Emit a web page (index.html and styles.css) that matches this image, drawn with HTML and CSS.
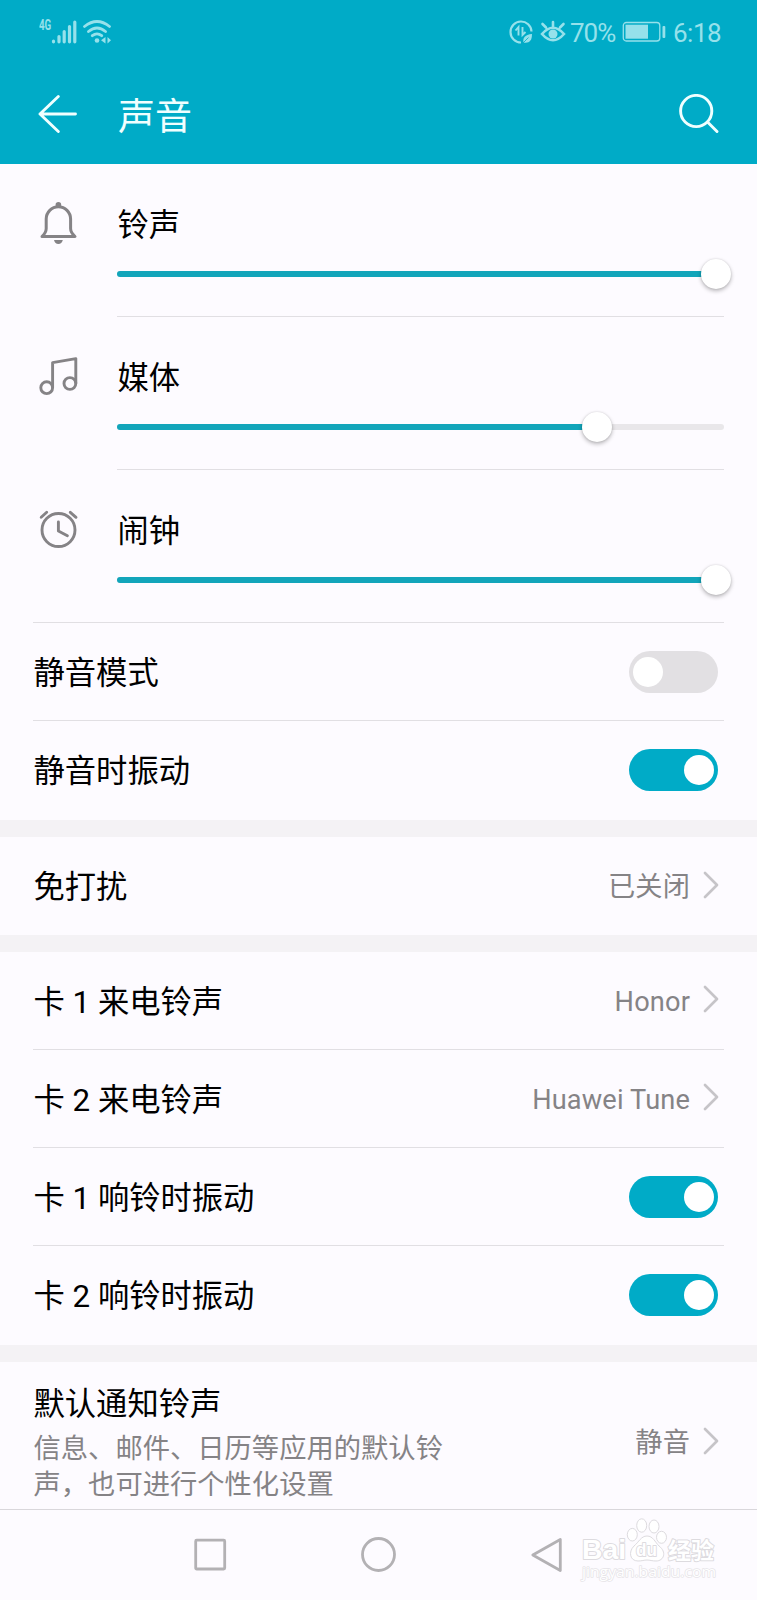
FILE: index.html
```html
<!DOCTYPE html>
<html lang="zh-CN">

<head>
    <meta charset="UTF-8">
    <title>声音</title>
    <link rel="stylesheet" href="styles.css">
</head>

<body>

    <header>
        <!-- Status bar -->
        <div class="status">
            <span class="network">4G</span>
            <svg class="signal" width="26" height="24" viewBox="0 0 26 24" stroke="currentColor" stroke-width="3.2" stroke-linecap="round">
                <path d="M2.5 21.2v.6M8 16.5v5.3M13.2 11.5v10.3M18.5 6.5v15.3M23.8 2v19.8" />
            </svg>
            <svg class="wifi" width="28" height="24" viewBox="0 0 28 24" fill="none" stroke="currentColor" stroke-width="2.8" stroke-linecap="round">
                <path d="M1.5 6.5Q14 -3.5 26.5 6.5M5.5 11.5Q14 4.5 22.5 11.5M9.3 15.7Q14 12 18.7 15.7" />
                <circle cx="14" cy="20.5" r="2.3" fill="currentColor" stroke="none" />
                <path d="M22.5 17v6.5L18 20.3zM24.5 17v6.5l3.5-3.2z" fill="currentColor" stroke="none" />
            </svg>
            <svg class="saver" width="24" height="26" viewBox="0 0 24 26" fill="none" stroke="currentColor" stroke-width="2.2">
                <path d="M12 23.5A10.5 10.5 0 1 1 22.5 12.5" />
                <path d="M6.5 11.5l3-3.5v8.5M13.5 8v8l3-3" stroke-width="1.9" />
                <path d="M23 15c0 7-3 9.5-8.5 8.5-1-4.5 1.500-8 8.500-8.500z" fill="currentColor" stroke="none" />
                <path d="M14 24l5.500-5.500" stroke="#00abc7" stroke-width=".8" />
            </svg>
            <svg class="eye" width="26" height="26" viewBox="0 0 26 26" fill="none" stroke="currentColor" stroke-width="2.6" stroke-linecap="round">
                <path d="M2 15Q13 2.500 24 15Q13 27.500 2 15zM13 7.500V3M6 8.500L2.500 5M20 8.500L23.500 5" />
                <circle cx="13" cy="15" r="4.500" fill="currentColor" stroke="none" />
            </svg>
            <span class="percent">70%</span>
            <svg class="battery" width="44" height="22" viewBox="0 0 44 22" fill="none" stroke="currentColor">
                <rect x="1.300" y="1.500" width="36.500" height="18.500" rx="3" stroke-width="1.300" />
                <rect x="3.500" y="3.700" width="22.500" height="14" fill="currentColor" stroke="none" />
                <rect x="40.500" y="5" width="2.800" height="12" rx="1" fill="currentColor" stroke="none" />
            </svg>
            <span class="time">6:18</span>
        </div>

        <!-- Title bar -->
        <div class="titlebar">
            <svg width="40" height="40" viewBox="0 0 40 40" fill="none" stroke="currentColor" stroke-width="2.9" stroke-linecap="round" stroke-linejoin="round">
                <path d="M37.5 20H2M20.3 2.5L2 20l18.300 17.500" />
            </svg>
            <h1>声音</h1>
            <svg width="40" height="40" viewBox="0 0 40 40" fill="none" stroke="currentColor" stroke-width="2.9" stroke-linecap="round">
                <circle cx="17.2" cy="17" r="15.6" />
                <path d="M28.5 28l9.500 9.500" />
            </svg>
        </div>
    </header>

    <main>
        <!-- Volume sliders -->
        <section>
            <div class="volume">
                <svg class="volume-icon" width="42" height="48" viewBox="0 0 42 48" fill="none" stroke="currentColor" stroke-width="3" stroke-linejoin="round">
                    <circle cx="20.4" cy="4.8" r="2.8" fill="currentColor" stroke="none" />
                    <path d="M8.200 19a12.200 12.200 0 0 1 24.400 0v9.500q0 4 4.400 8H4q4.200-4 4.200-8z" />
                    <path d="M16 40h8.800q-1 4-4.400 4t-4.400-4z" fill="currentColor" stroke="none" />
                </svg>
                <div class="volume-body">
                    <div class="label">铃声</div>
                    <div class="track"><div class="fill" style="width: 98.6%"></div></div>
                </div>
            </div>
            <div class="volume">
                <svg class="volume-icon" width="42" height="48" viewBox="0 0 42 48" fill="none" stroke="currentColor" stroke-width="2.9" stroke-linejoin="round">
                    <circle cx="8.7" cy="34.7" r="5.9" />
                    <circle cx="31.9" cy="30.5" r="5.9" />
                    <path d="M14.600 34.700V9.600l23.200-4v25" />
                </svg>
                <div class="volume-body">
                    <div class="label">媒体</div>
                    <div class="track"><div class="fill" style="width: 79.1%"></div></div>
                </div>
            </div>
            <div class="volume last">
                <svg class="volume-icon" width="42" height="48" viewBox="0 0 42 48" fill="none" stroke="currentColor" stroke-width="2.9" stroke-linecap="round" stroke-linejoin="round">
                    <circle cx="20.5" cy="24" r="16.5" />
                    <path d="M20.400 16v9l9 4.700M3.200 11.300l5.500-5M32.300 6.300l5.700 5" />
                </svg>
                <div class="volume-body">
                    <div class="label">闹钟</div>
                    <div class="track"><div class="fill" style="width: 98.6%"></div></div>
                </div>
            </div>
            <div class="row">
                <div class="label">静音模式</div>
                <div class="switch"></div>
            </div>
            <div class="row">
                <div class="label">静音时振动</div>
                <div class="switch on"></div>
            </div>
        </section>

        <section>
            <div class="row">
                <div class="label">免打扰</div>
                <div class="value">已关闭</div>
                <svg class="chevron" width="16" height="28" viewBox="0 0 16 28"><path d="M2 2l12 12L2 26" /></svg>
            </div>
        </section>

        <!-- SIM cards -->
        <section>
            <div class="row">
                <div class="label">卡 1 来电铃声</div>
                <div class="value">Honor</div>
                <svg class="chevron" width="16" height="28" viewBox="0 0 16 28"><path d="M2 2l12 12L2 26" /></svg>
            </div>
            <div class="row">
                <div class="label">卡 2 来电铃声</div>
                <div class="value">Huawei Tune</div>
                <svg class="chevron" width="16" height="28" viewBox="0 0 16 28"><path d="M2 2l12 12L2 26" /></svg>
            </div>
            <div class="row">
                <div class="label">卡 1 响铃时振动</div>
                <div class="switch on"></div>
            </div>
            <div class="row">
                <div class="label">卡 2 响铃时振动</div>
                <div class="switch on"></div>
            </div>
        </section>

        <section>
            <div class="row tall">
                <div class="text">
                    <div class="label">默认通知铃声</div>
                    <div class="desc">信息、邮件、日历等应用的默认铃<br>声，也可进行个性化设置</div>
                </div>
                <div class="value">静音</div>
                <svg class="chevron" width="16" height="28" viewBox="0 0 16 28"><path d="M2 2l12 12L2 26" /></svg>
            </div>
        </section>
    </main>

    <!-- Navigation keys -->
    <nav>
        <svg width="36" height="36" viewBox="0 0 36 36"><rect x="2.700" y="3.200" width="29" height="28.800" rx="1" /></svg>
        <svg width="36" height="36" viewBox="0 0 36 36"><circle cx="17.5" cy="17.5" r="16" /></svg>
        <svg width="36" height="36" viewBox="0 0 36 36"><path d="M31.3 2.5v31L3.8 18z" /></svg>
    </nav>

    <svg class="watermark" width="150" height="70" viewBox="0 0 150 70">
        <text class="brand" x="6" y="45" textLength="44" lengthAdjust="spacingAndGlyphs">Bai</text>
        <g class="paw">
            <ellipse cx="56.3" cy="20.7" rx="5" ry="6.3" />
            <ellipse cx="65.7" cy="11.5" rx="5" ry="6.7" />
            <ellipse cx="78" cy="12.5" rx="5" ry="6.5" />
            <ellipse cx="85.5" cy="23.3" rx="5" ry="6" />
            <path d="M71 22c6 0 8 6 12 10 8 6 5 15-3 15-4 0-6-1-9-1s-5 1-9 1c-8 0-10-9-4-15 5-4 7-10 13-10z" />
        </g>
        <text class="du" x="60" y="42" textLength="21" lengthAdjust="spacingAndGlyphs">du</text>
        <text class="cn" x="92" y="45" textLength="46" lengthAdjust="spacingAndGlyphs">经验</text>
        <text class="site" x="6" y="63" textLength="134" lengthAdjust="spacingAndGlyphs">jingyan.baidu.com</text>
    </svg>

</body>

</html>
```

FILE: styles.css
```css
* {
    box-sizing: border-box;
}

body {
    margin: 0;
    height: 1600px;
    display: flex;
    flex-direction: column;
    position: relative;
    overflow: hidden;
    background: #fdfbff;
    color: #000;
    font-family: Roboto, "Noto Sans CJK SC", sans-serif;
}

svg {
    display: block;
    flex: none;
}

header {
    height: 164px;
    flex: none;
    background: #00abc7;
    color: #f0ffff;
}

.status {
    height: 64px;
    padding: 0 36px 0 39px;
    display: flex;
    align-items: center;
    color: #96e1eb;
    font-size: 26px;
}

.network {
    width: 12px;
    margin-bottom: 14px;
    font-size: 14px;
    font-weight: 700;
    line-height: 14px;
    transform: scaleX(.7);
    transform-origin: left;
}

.wifi {
    margin-left: 6px;
}

.saver {
    margin-left: auto;
}

.eye {
    margin: 0 4px 0 7px;
}

.percent {
    width: 47px;
    padding-top: 1px;
    letter-spacing: -1px;
}

.battery {
    margin: 0 7px 0 5px;
}

.time {
    width: 48px;
    padding-top: 1px;
    letter-spacing: -.5px;
}

.titlebar {
    height: 100px;
    padding: 0 38px;
    display: flex;
    align-items: center;
}

.titlebar h1 {
    flex: 1;
    margin: 7px 0 0 40px;
    font-size: 37px;
    font-weight: 400;
    line-height: 50px;
}

main {
    height: 1345px;
    flex: none;
}

section + section {
    border-top: 17px solid #f4f2f5;
}

.volume {
    height: 153px;
    margin: 0 33px;
    display: flex;
}

.volume-icon {
    margin: 36px 37px 0 5px;
    color: #858386;
}

.volume-body {
    flex: 1;
    padding-top: 42px;
    border-bottom: 1px solid #e1dfe3;
}

.volume.last {
    border-bottom: 1px solid #e1dfe3;
}

.volume.last .volume-body {
    border-bottom: 0;
}

.label {
    padding-left: .5px;
    font-size: 31.3px;
    line-height: 40px;
}

.track {
    height: 6px;
    margin-top: 25px;
    border-radius: 3px;
    background: #e9e7ea;
}

.fill {
    height: 6px;
    border-radius: 3px;
    background: #12a5ba;
    position: relative;
}

/* slider thumb */
.fill::after {
    content: "";
    position: absolute;
    top: -12px;
    right: -15px;
    width: 30px;
    height: 30px;
    border-radius: 50%;
    background: #fff;
    box-shadow: 0 2px 4px rgba(0, 0, 0, .28), 0 0 2px rgba(0, 0, 0, .12);
}

.row {
    height: 98px;
    margin: 0 33px;
    padding-right: 6px;
    display: flex;
    align-items: center;
    border-bottom: 1px solid #e1dfe3;
}

.row .label {
    flex: 1;
    padding-top: 4px;
}

.row:last-child {
    border-bottom: 0;
}

/* closing row of a list */
.row + .row:last-child {
    height: 99px;
    padding-bottom: 2px;
}

.switch {
    width: 89px;
    height: 42px;
    padding: 6px 4px;
    border-radius: 21px;
    background: #e2e0e3;
}

.switch::after {
    content: "";
    display: block;
    width: 30px;
    height: 30px;
    border-radius: 50%;
    background: #fff;
}

.switch.on {
    background: #00abc7;
}

.switch.on::after {
    margin-left: auto;
}

.value {
    padding-top: 2px;
    color: #858386;
    font-size: 27.2px;
    line-height: 36px;
    letter-spacing: .15px;
}

.chevron {
    margin: 0 -1px 3px 13px;
    fill: none;
    stroke: #c6c4c8;
    stroke-width: 2.7;
    stroke-linecap: round;
    stroke-linejoin: round;
}

.row.tall {
    height: 160px;
}

.text {
    flex: 1;
    align-self: flex-start;
    padding-top: 19px;
}

.desc {
    margin-top: 6px;
    padding-left: .5px;
    color: #858386;
    font-size: 27.3px;
    line-height: 36px;
}

nav {
    flex: 1;
    display: flex;
    justify-content: center;
    align-items: center;
    gap: 132px;
    border-top: 1px solid #d9d7db;
    background: #fdfbff;
}

nav svg {
    fill: none;
    stroke: #b3b1b4;
    stroke-width: 2.8;
    stroke-linejoin: round;
}

.watermark {
    position: absolute;
    left: 576px;
    top: 1514px;
    fill: #fff;
    stroke: #dddbdf;
    stroke-width: 1;
}

.watermark text {
    paint-order: stroke;
    stroke-width: 2;
    stroke-linejoin: round;
}

.brand {
    font: bold 28px "Liberation Sans", sans-serif;
}

.du {
    font: bold 19px "Liberation Sans", sans-serif;
}

.cn {
    font: bold 23px "Noto Sans CJK SC", sans-serif;
}

.watermark .site {
    font: 15px "Open Sans", sans-serif;
    stroke: #e6e4e8;
    stroke-width: 1.5;
}
```
